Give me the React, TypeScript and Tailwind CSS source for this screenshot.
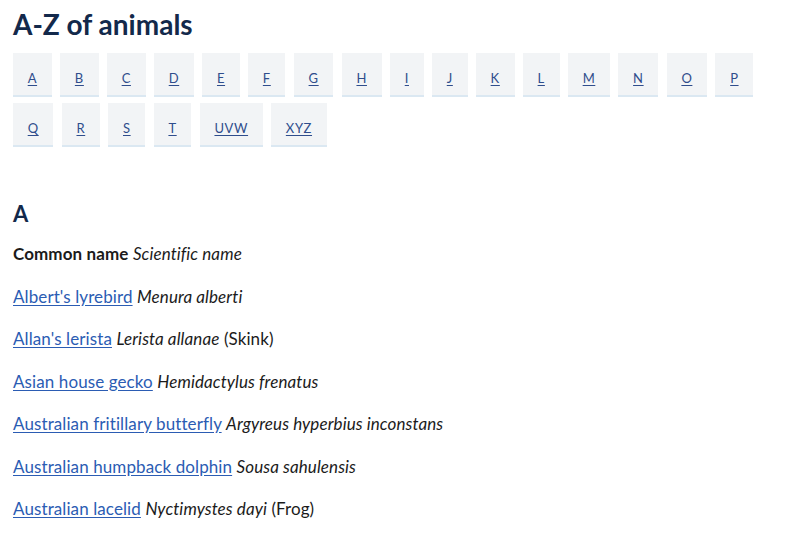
import React from 'react';

const letters = ['A', 'B', 'C', 'D', 'E', 'F', 'G', 'H', 'I', 'J', 'K', 'L', 'M', 'N', 'O', 'P', 'Q', 'R', 'S', 'T', 'UVW', 'XYZ'];

interface Animal {
  common: string;
  scientific: string;
  note?: string;
}

const animals: Animal[] = [
  { common: "Albert's lyrebird", scientific: 'Menura alberti' },
  { common: "Allan's lerista", scientific: 'Lerista allanae', note: '(Skink)' },
  { common: 'Asian house gecko', scientific: 'Hemidactylus frenatus' },
  { common: 'Australian fritillary butterfly', scientific: 'Argyreus hyperbius inconstans' },
  { common: 'Australian humpback dolphin', scientific: 'Sousa sahulensis' },
  { common: 'Australian lacelid', scientific: 'Nyctimystes dayi', note: '(Frog)' },
];

export default function App() {
  return (
    <div className="min-h-[533px] w-[800px] bg-white px-[13px] pt-[9px] font-['Lato','Liberation_Sans',sans-serif] text-[#1b1b1b]">
      <h1 className="text-[28px] font-bold leading-[30px] text-[#13294b]">A-Z of animals</h1>

      {/* Letter nav */}
      <nav className="mt-[14px] flex w-[760px] flex-wrap gap-x-[8.4px] gap-y-[6px]">
        {letters.map((l) => (
          <a
            key={l}
            href="#"
            className="h-[44px] border-b-2 border-[#dbe8f2] bg-[#f2f4f6] px-[14.7px] pt-[17px] text-[13px] leading-[16px] tracking-[0.6px] text-[#2f4d8c] underline underline-offset-[2px]"
          >
            {l}
          </a>
        ))}
      </nav>

      <h2 className="mt-[55px] text-[22px] font-bold leading-[24px] text-[#13294b]">A</h2>

      <div className="mt-[16px] flex flex-col gap-[18.5px] text-[17px] leading-[24px] tracking-[0.1px]">
        <p>
          <span className="font-bold">Common name</span> <i>Scientific name</i>
        </p>
        {animals.map((a) => (
          <p key={a.common}>
            <a href="#" className="text-[#2b5cb3] underline underline-offset-[2px]">
              {a.common}
            </a>{' '}
            <i>{a.scientific}</i>
            {a.note && <span> {a.note}</span>}
          </p>
        ))}
      </div>
    </div>
  );
}
